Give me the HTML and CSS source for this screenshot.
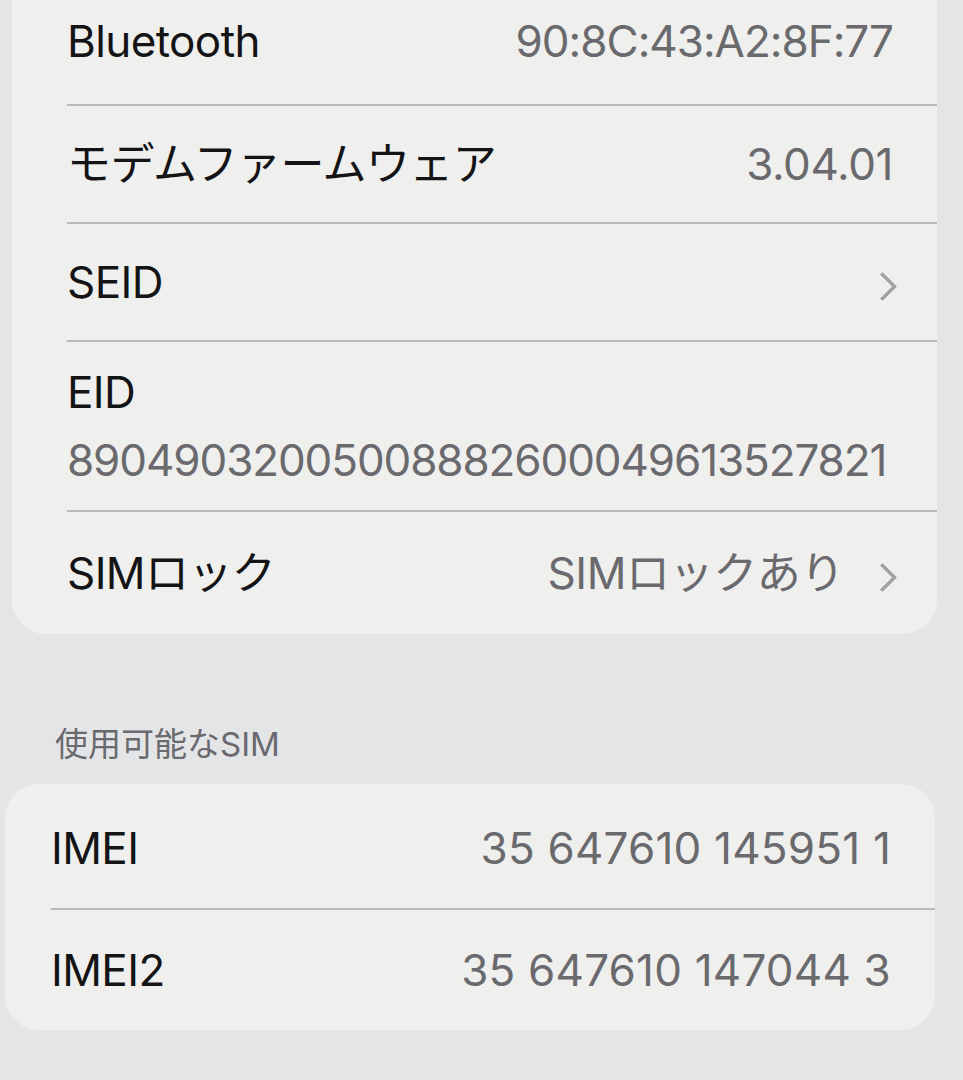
FILE: index.html
```html
<!DOCTYPE html>
<html lang="ja">
<head>
    <meta charset="UTF-8">
    <meta name="viewport" content="width=device-width, initial-scale=1.0">
    <title>情報</title>
    <link rel="stylesheet" href="styles.css">
</head>
<body>
    <!-- 上のグループ -->
    <div class="group group_top">
        <div class="row">
            <span class="label">Bluetooth</span>
            <span class="value mac">90:8C:43:A2:8F:77</span>
        </div>
        <div class="row">
            <span class="label">モデムファームウェア</span>
            <span class="value">3.04.01</span>
        </div>
        <div class="row">
            <span class="label">SEID</span>
            <span class="chev"></span>
        </div>
        <div class="row row_tall">
            <span class="label">EID</span>
            <span class="value long">89049032005008882600049613527821</span>
        </div>
        <div class="row last">
            <span class="label">SIMロック</span>
            <span class="value">SIMロックあり</span>
            <span class="chev"></span>
        </div>
    </div>

    <p class="header">使用可能なSIM</p>

    <!-- SIM -->
    <div class="group group_sim">
        <div class="row">
            <span class="label">IMEI</span>
            <span class="value">35 647610 145951 1</span>
        </div>
        <div class="row last">
            <span class="label">IMEI2</span>
            <span class="value">35 647610 147044 3</span>
        </div>
    </div>
</body>
</html>
```
FILE: styles.css
```css
*{
    margin: 0;
    padding: 0;
}
body{
    background-color: #e4e5e7;
    font-family: Inter, "Noto Sans CJK JP", sans-serif;
    width: 963px;
    height: 1080px;
    overflow: hidden;
}
.group{
    background-color: #efefed;
    border-radius: 0 0 34px 34px;
}
.group_top{
    margin: 0 26px 0 12px;
    padding-left: 55px;
}
.group_sim{
    margin: 0 28px 0 5px;
    padding: 4px 0 0 46px;
    border-radius: 34px;
}
.row{
    display: flex;
    align-items: center;
    height: 116px;
    padding-right: 44px;
    border-bottom: 2px solid #b9b9ba;
}
.row.last{
    border-bottom: none;
}
.group_top .row:first-child{
    height: 104px;
    align-items: flex-start;
}
.group_top .row:first-child .label,
.group_top .row:first-child .value{
    margin-top: 15px;
}
.group_top .row.last{
    height: 122px;
}
.row_tall{
    height: 168px;
    flex-direction: column;
    align-items: flex-start;
    justify-content: center;
    gap: 16px;
}
.row_tall .label{
    flex: none;
}
.label{
    font-size: 44px;
    line-height: 52px;
    color: #141416;
    flex: 1;
    letter-spacing: -0.6px;
}
.value{
    font-size: 44px;
    line-height: 52px;
    color: #6a6a6e;
    letter-spacing: -0.4px;
}
.value.mac{
    letter-spacing: -1px;
}
.value.long{
    letter-spacing: -1.1px;
}
.chev{
    width: 17px;
    height: 17px;
    border-top: 4px solid #a3a3a6;
    border-right: 4px solid #a3a3a6;
    border-radius: 2px;
    transform: rotate(45deg);
    margin: 8px 0 0 28px;
}
.header{
    font-size: 33px;
    line-height: 40px;
    color: #6a6a6e;
    padding: 90px 0 20px 55px;
}
.group_sim .row{
    height: 120px;
}
.group_sim .value{
    letter-spacing: 0.2px;
}
```
